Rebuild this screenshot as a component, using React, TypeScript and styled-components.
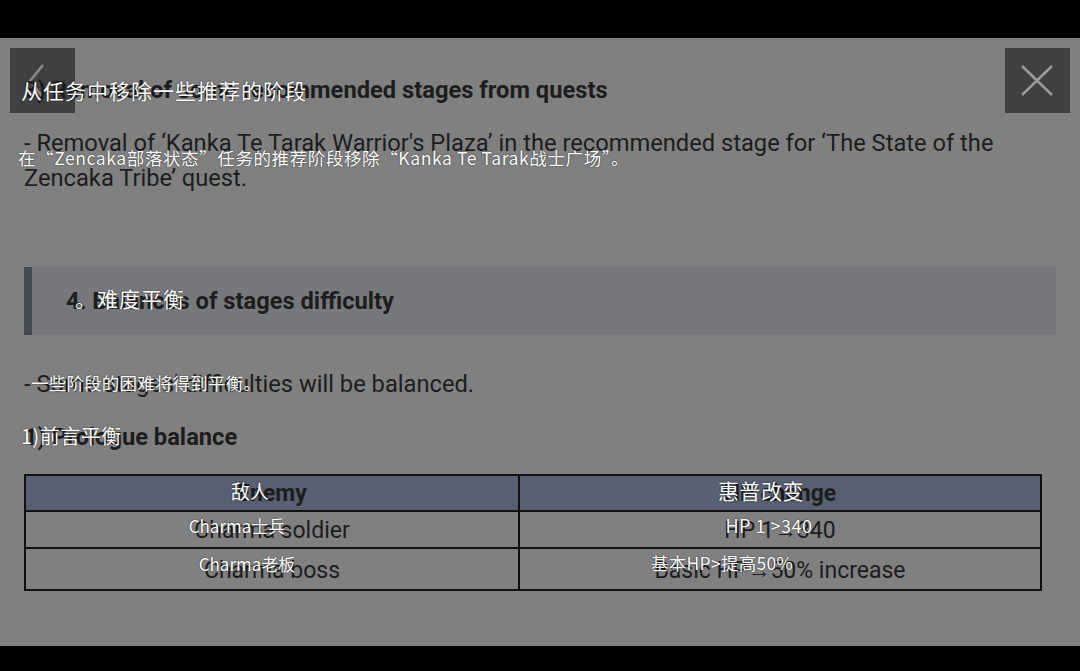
import React from "react";
import styled, { createGlobalStyle } from "styled-components";

const Global = createGlobalStyle`
  html, body { margin: 0; padding: 0; background: #000; }
  body { font-family: Roboto, "Noto Sans", sans-serif; }
  * { box-sizing: border-box; }
`;

const Screen = styled.div`
  width: 1080px;
  height: 671px;
  display: flex;
  flex-direction: column;
  background: #000;
  overflow: hidden;
`;

const Bar = styled.div<{ $h: number }>`
  height: ${(p) => p.$h}px;
  flex: none;
  background: #000;
`;

const Viewport = styled.div`
  position: relative;
  flex: 1;
  background: #808080;
  overflow: hidden;
`;

const Content = styled.div`
  padding: 34px 24px 0 24px;
  display: flex;
  flex-direction: column;
  color: #1d1d1d;
  font-size: 23.7px;
  line-height: 35px;
`;

const Block = styled.div<{ $mt?: number }>`
  position: relative;
  margin-top: ${(p) => p.$mt ?? 0}px;
`;

const Title = styled.div`
  font-weight: 700;
  line-height: 36px;
`;

const Para = styled.div`
  font-weight: 400;
`;

const SectionHead = styled.div`
  height: 68px;
  display: flex;
  align-items: center;
  background: #76787b;
  border-left: 8px solid #404b53;
  padding-left: 34px;
  font-weight: 700;
`;

const Sub = styled.div`
  font-weight: 700;
`;

const Table = styled.div`
  width: 1018px;
  display: grid;
  grid-template-columns: 494px 1fr;
  border: 2px solid #111;
`;

const Cell = styled.div<{ $head?: boolean; $h: number; $right?: boolean; $last?: boolean }>`
  height: ${(p) => p.$h}px;
  display: flex;
  align-items: center;
  justify-content: center;
  background: ${(p) => (p.$head ? "#566072" : "transparent")};
  font-weight: ${(p) => (p.$head ? 700 : 400)};
  font-size: 23px;
  border-right: ${(p) => (p.$right ? "none" : "2px solid #111")};
  border-bottom: ${(p) => (p.$last ? "none" : "2px solid #111")};
  line-height: 1;
  padding-top: ${(p) => (p.$head ? 0 : 2)}px;
`;

const Tr = styled.span<{ $size: number; $x: number; $y: number; $center?: boolean; $ls?: number }>`
  position: absolute;
  left: ${(p) => p.$x}px;
  top: ${(p) => p.$y}px;
  transform: ${(p) => (p.$center ? "translate(-50%, -50%)" : "translateY(-50%)")};
  font-family: "Noto Sans CJK SC", "Noto Sans", sans-serif;
  font-weight: 400;
  font-size: ${(p) => p.$size}px;
  letter-spacing: ${(p) => p.$ls ?? 0}px;
  line-height: 1;
  color: #fff;
  white-space: nowrap;
  text-shadow: 0 0 1px rgba(0, 0, 0, 0.6), 0 0 2px rgba(0, 0, 0, 0.35);
  pointer-events: none;
`;

const NavButton = styled.button<{ $side: "left" | "right" }>`
  position: absolute;
  top: 10px;
  ${(p) => (p.$side === "left" ? "left: 10px;" : "right: 10px;")}
  width: 65px;
  height: 65px;
  background: #404040;
  border: none;
  padding: 0;
  margin: 0;
  display: flex;
  align-items: center;
  justify-content: center;
`;

const Overlay = styled.div`
  position: absolute;
  inset: 0;
  pointer-events: none;
  z-index: 2;
`;

export default function App() {
  return (
    <>
      <Global />
      <Screen>
        <Bar $h={38} />
        <Viewport>
          <NavButton $side="left" aria-label="back">
            <svg width="65" height="65" viewBox="0 0 65 65">
              <path d="M33 17 L20 33 L33 49" fill="none" stroke="#8a8a8a" strokeWidth="2.5" />
            </svg>
          </NavButton>
          <NavButton $side="right" aria-label="close">
            <svg width="65" height="65" viewBox="0 0 65 65">
              <path d="M17 18 L47 47 M47 18 L17 47" fill="none" stroke="#9a9a9a" strokeWidth="2.5" />
            </svg>
          </NavButton>
          <Content>
            <Block>
              <Title>3) Removal of some recommended stages from quests</Title>
            </Block>
            <Block $mt={18}>
              <Para>
                - Removal of ‘Kanka Te Tarak Warrior's Plaza’ in the recommended stage for ‘The State of the
                Zencaka Tribe’ quest.
              </Para>
            </Block>
            <Block $mt={71}>
              <SectionHead>4. Balances of stages difficulty</SectionHead>
            </Block>
            <Block $mt={32}>
              <Para>- Some stages' difficulties will be balanced.</Para>
            </Block>
            <Block $mt={18}>
              <Sub>1) Prologue balance</Sub>
            </Block>
            <Block $mt={19}>
              <Table>
                <Cell $head $h={36}>Enemy</Cell>
                <Cell $head $h={36} $right>HP change</Cell>
                <Cell $h={37}>Charma soldier</Cell>
                <Cell $h={37} $right>HP 1→340</Cell>
                <Cell $h={40} $last>Charma boss</Cell>
                <Cell $h={40} $right $last>Basic HP→50% increase</Cell>
              </Table>
            </Block>
          </Content>
          <Overlay>
            <Tr $size={21} $x={21} $y={52} $ls={1}>从任务中移除一些推荐的阶段</Tr>
            <Tr $size={17.5} $x={18} $y={120} $ls={0.6}>在“Zencaka部落状态”任务的推荐阶段移除“Kanka Te Tarak战士广场”。</Tr>
            <Tr $size={21} $x={75} $y={260} $ls={1}>。难度平衡</Tr>
            <Tr $size={17.5} $x={31} $y={345} $ls={0.2}>一些阶段的困难将得到平衡。</Tr>
            <Tr $size={20} $x={21} $y={398} $ls={0.5}>1)前言平衡</Tr>
            <Tr $size={19} $x={250} $y={452} $center>敌人</Tr>
            <Tr $size={21} $x={761} $y={452} $center $ls={0.5}>惠普改变</Tr>
            <Tr $size={17} $x={237} $y={487} $center>Charma士兵</Tr>
            <Tr $size={18} $x={769} $y={487} $center $ls={0.5}>HP 1 &gt;340</Tr>
            <Tr $size={17} $x={247} $y={525} $center>Charma老板</Tr>
            <Tr $size={17.5} $x={722} $y={525} $center $ls={0.3}>基本HP&gt;提高50%</Tr>
          </Overlay>
        </Viewport>
        <Bar $h={25} />
      </Screen>
    </>
  );
}
